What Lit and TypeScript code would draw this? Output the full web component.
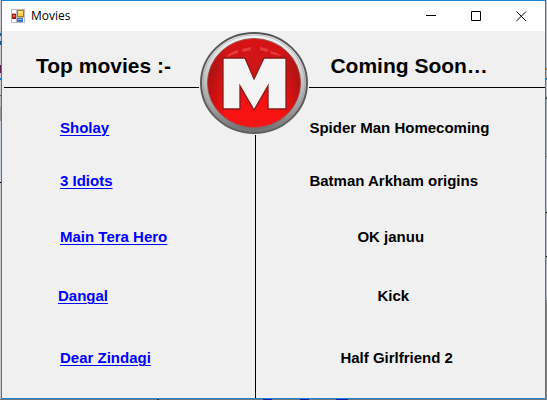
import { LitElement, html, css } from "lit";
import { customElement, state } from "lit/decorators.js";

interface Movie {
  title: string;
  indent: string;
}

@customElement("movie-logo")
class MovieLogo extends LitElement {
  static styles = css`
    :host { display: block; }
    svg { display: block; width: 110px; height: 104px; }
  `;
  render() {
    return html`
      <svg viewBox="0 0 110 104" role="img" aria-label="M">
        <defs>
          <linearGradient id="rim" x1="0" y1="0" x2="0" y2="1">
            <stop offset="0" stop-color="#f4f4f4" />
            <stop offset=".35" stop-color="#d2d2d2" />
            <stop offset=".75" stop-color="#a0a0a0" />
            <stop offset="1" stop-color="#686868" />
          </linearGradient>
          <linearGradient id="edge" x1="0" y1="0" x2="0" y2="1">
            <stop offset="0" stop-color="#555" />
            <stop offset="1" stop-color="#606060" />
          </linearGradient>
          <linearGradient id="red" x1="0" y1="0" x2="0" y2="1">
            <stop offset="0" stop-color="#d81214" />
            <stop offset=".35" stop-color="#cc1618" />
            <stop offset=".8" stop-color="#fa1212" />
            <stop offset="1" stop-color="#f51414" />
          </linearGradient>
          <linearGradient id="side">
            <stop offset="0" stop-color="#8c0c0c" stop-opacity=".5" />
            <stop offset=".2" stop-color="#8c0c0c" stop-opacity="0" />
            <stop offset=".8" stop-color="#8c0c0c" stop-opacity="0" />
            <stop offset="1" stop-color="#8c0c0c" stop-opacity=".5" />
          </linearGradient>
        </defs>
        <ellipse cx="55" cy="52" rx="53" ry="50" fill="url(#rim)" stroke="url(#edge)" stroke-width="2" />
        <ellipse cx="55" cy="52" rx="51" ry="48" fill="none" stroke="#8c8c8c" stroke-opacity=".5" />
        <ellipse cx="55" cy="52" rx="46.5" ry="44.5" fill="url(#red)" stroke="#a05050" />
        <ellipse cx="55" cy="52" rx="46" ry="44" fill="url(#side)" />
        <path d="M28 25Q33 20 39 19V22Q34 23 29 26ZM43 18L52 16V19L44 21ZM61 16L69 18V21L61 19ZM71 20Q78 21 82 25L72 23Z" fill="#e23c3c" />
        <path d="M24 27H46L55 48L65 27H87V78H69V55L55 79L41 55V78H24Z" fill="#f4f4f4" stroke="#8e1717" stroke-width="1.3" />
      </svg>
    `;
  }
}

@customElement("app-root")
class AppRoot extends LitElement {
  @state() private topMovies: Movie[] = [
    { title: "Sholay", indent: "base" },
    { title: "3 Idiots", indent: "base" },
    { title: "Main Tera Hero", indent: "base" },
    { title: "Dangal", indent: "outdent" },
    { title: "Dear Zindagi", indent: "base" },
  ];
  @state() private comingSoon: Movie[] = [
    { title: "Spider Man Homecoming", indent: "near" },
    { title: "Batman Arkham origins", indent: "near" },
    { title: "OK januu", indent: "far" },
    { title: "Kick", indent: "farthest" },
    { title: "Half Girlfriend 2", indent: "middle" },
  ];

  static styles = css`
    :host {
      box-sizing: border-box;
      min-height: 100vh;
      display: flex;
      padding: 0 1px 1px;
      color: #000;
      font-family: "Liberation Sans", Arial, sans-serif;
      background:
        linear-gradient(90deg, #777 0 157px, #333 157px 159px, #777 159px 263px, #1c1c9c 263px 272px, #777 272px 300px, #1c1c9c 300px 309px, #777 309px 336px, #1c1c9c 336px 348px, #777 348px) bottom / 100% 1px no-repeat,
        linear-gradient(#c8ccd2 0 33px, #17549a 33px 36px, #c8ccd2 36px 41px, #17549a 41px 45px, #c8ccd2 45px 65px, #681c48 65px 73px, #c8ccd2 73px 78px, #0078d7 78px 80px, #c8ccd2 80px 95px, #555 95px 96px, #b4b8bf 96px 107px, #999 107px 121px, #c8d0da 121px 182px, #000 182px 183px, #c8ccd2 183px) left / 1px 100% no-repeat,
        linear-gradient(#b8c0cc 0 68px, #b06e2c 68px 70px, #b8c0cc 70px 78px, #0078d7 78px 80px, #b8c0cc 80px 97px, #444 97px 99px, #a9b2bf 99px 156px, #777 156px 157px, #b8c5d5 157px 212px, #000 212px 213px, #b0b8c2 213px 256px, #000 256px 257px, #b0b8c2 257px 300px, #858585 300px) right / 1px 100% no-repeat;
    }
    .window {
      flex: 1;
      display: flex;
      flex-direction: column;
      background: #f0f0f0;
      border: 1px solid #1883d7;
    }
    .titlebar {
      display: flex;
      align-items: center;
      height: 30px;
      padding-right: 1px;
      background: #fff;
    }
    .app-icon { width: 14px; height: 14px; margin: 0 6px 0 9px; }
    .caption {
      flex: 1;
      margin: 0;
      font: 400 12px/16px "Open Sans", "Noto Sans", sans-serif;
    }
    .control {
      display: flex;
      align-items: center;
      justify-content: center;
      width: 45px;
      height: 30px;
      padding: 0;
      border: 0;
      background: none;
    }
    .control svg { display: block; width: 11px; height: 11px; }
    .content {
      position: relative;
      flex: 1;
      display: grid;
      grid-template-columns: 7fr 8fr;
      grid-template-rows: 57px 1fr;
    }
    .headings {
      grid-column: 1 / -1;
      display: grid;
      grid-template-columns: subgrid;
      margin-left: 2px;
      border-bottom: 1px solid #000;
    }
    h2 { margin: 0; padding-top: 22px; font-size: 21px; line-height: 26px; white-space: nowrap; }
    .top-heading { padding-left: 32px; }
    .soon-heading { padding-left: 75px; }
    ul {
      display: grid;
      grid-template-rows: 53px 56px 59px 62px 20px;
      margin: 0;
      padding: 30px 0 0;
      list-style: none;
      font-size: 15px;
      font-weight: 700;
      line-height: 20px;
      white-space: nowrap;
    }
    .soon { border-left: 1px solid #000; }
    a { color: #00f; text-decoration: underline; text-decoration-thickness: 1px; text-underline-offset: 2px; }
    .base { padding-left: 58px; }
    .outdent { padding-left: 56px; }
    .near { padding-left: 53px; }
    .middle { padding-left: 84px; }
    .far { padding-left: 101px; }
    .farthest { padding-left: 121px; }
    .logo {
      position: absolute;
      top: 0;
      left: calc(100% * 7 / 15 - 1px);
      transform: translateX(-50%);
      background: #f0f0f0;
    }
  `;

  render() {
    return html`
      <main class="window">
        <header class="titlebar">
          <svg class="app-icon" viewBox="0 0 14 14" aria-hidden="true">
            <path d="M0 0H14V14H0Z" fill="#b9b9b9" />
            <path d="M1 1H5V4H1ZM1 10H5V13H1ZM12 9H13V13H12Z" fill="#fff" />
            <path d="M6 1H13V8H6Z" fill="#b07b08" />
            <path d="M7 2H12V7H7Z" fill="#ffd34d" />
            <path d="M7 2H11V4H7Z" fill="#ffe691" />
            <path d="M1 5H5V10H1Z" fill="#9d1d13" />
            <path d="M2 6H4V8H2Z" fill="#ec6759" />
            <path d="M6 9H12V13H6Z" fill="#3c6fd0" />
            <path d="M7 10H11V11H7Z" fill="#8ab3ff" />
          </svg>
          <h1 class="caption">Movies</h1>
          <button class="control" aria-label="Minimize">
            <svg viewBox="0 0 11 11"><path d="M0 4.5H10" stroke="#000" /></svg>
          </button>
          <button class="control" aria-label="Maximize">
            <svg viewBox="0 0 11 11"><path d="M.5 .5H9.5V9.5H.5Z" fill="none" stroke="#000" /></svg>
          </button>
          <button class="control" aria-label="Close">
            <svg viewBox="0 0 11 11"><path d="M.5 .5L10 10M10 .5L.5 10" stroke="#000" /></svg>
          </button>
        </header>
        <section class="content">
          <div class="headings">
            <h2 class="top-heading">Top movies :-</h2>
            <h2 class="soon-heading">Coming Soon…</h2>
          </div>
          <ul class="top">
            ${this.topMovies.map((m) => html`<li class=${m.indent}><a href="#">${m.title}</a></li>`)}
          </ul>
          <ul class="soon">
            ${this.comingSoon.map((m) => html`<li class=${m.indent}>${m.title}</li>`)}
          </ul>
          <movie-logo class="logo"></movie-logo>
        </section>
      </main>
    `;
  }
}
